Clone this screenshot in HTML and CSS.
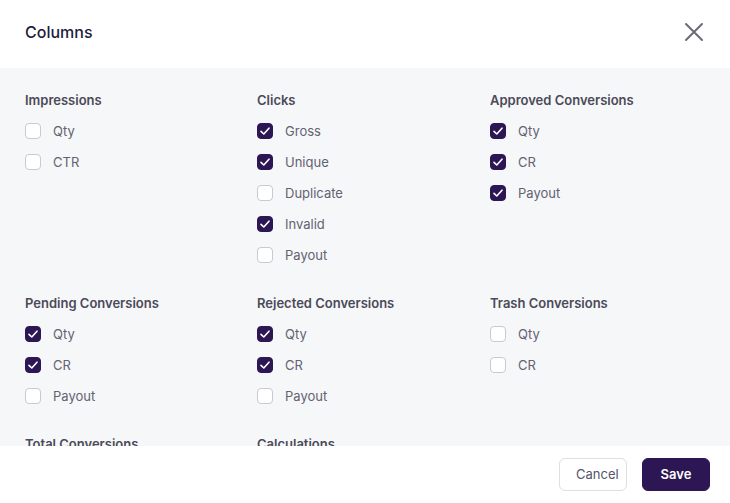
FILE: index.html
```html
<!DOCTYPE html>
<html lang="en">
<head>
  <meta charset="UTF-8" />
  <meta name="viewport" content="width=device-width, initial-scale=1.0" />
  <title>Columns</title>
  <link rel="stylesheet" href="styles.css">
</head>
<body>
  <div class="modal">
    <div class="modal-header">
      <h1>Columns</h1>
      <button class="close" aria-label="Close">
        <svg width="20" height="20" viewBox="0 0 20 20" fill="none" stroke="#6b6a7b" stroke-width="2" stroke-linecap="round">
          <path d="M2 2 L18 18 M18 2 L2 18" />
        </svg>
      </button>
    </div>

    <div class="modal-body">
      <div class="grid">
        <div class="group">
          <h2>Impressions</h2>
          <label class="item"><span class="box"></span>Qty</label>
          <label class="item"><span class="box"></span>CTR</label>
        </div>
        <div class="group">
          <h2>Clicks</h2>
          <label class="item"><span class="box checked"></span>Gross</label>
          <label class="item"><span class="box checked"></span>Unique</label>
          <label class="item"><span class="box"></span>Duplicate</label>
          <label class="item"><span class="box checked"></span>Invalid</label>
          <label class="item"><span class="box"></span>Payout</label>
        </div>
        <div class="group">
          <h2>Approved Conversions</h2>
          <label class="item"><span class="box checked"></span>Qty</label>
          <label class="item"><span class="box checked"></span>CR</label>
          <label class="item"><span class="box checked"></span>Payout</label>
        </div>

        <div class="group">
          <h2>Pending Conversions</h2>
          <label class="item"><span class="box checked"></span>Qty</label>
          <label class="item"><span class="box checked"></span>CR</label>
          <label class="item"><span class="box"></span>Payout</label>
        </div>
        <div class="group">
          <h2>Rejected Conversions</h2>
          <label class="item"><span class="box checked"></span>Qty</label>
          <label class="item"><span class="box checked"></span>CR</label>
          <label class="item"><span class="box"></span>Payout</label>
        </div>
        <div class="group">
          <h2>Trash Conversions</h2>
          <label class="item"><span class="box"></span>Qty</label>
          <label class="item"><span class="box"></span>CR</label>
        </div>

        <div class="group">
          <h2>Total Conversions</h2>
        </div>
        <div class="group">
          <h2>Calculations</h2>
        </div>
      </div>
    </div>

    <div class="modal-footer">
      <button class="btn btn-cancel">Cancel</button>
      <button class="btn btn-save">Save</button>
    </div>
  </div>
</body>
</html>
```

FILE: styles.css
```css
* {
  box-sizing: border-box;
  margin: 0;
  padding: 0;
}
body {
  font-family: Inter, 'Noto Sans', sans-serif;
  background: #fff;
  width: 730px;
  height: 503px;
  overflow: hidden;
}
.modal {
  display: flex;
  flex-direction: column;
  height: 503px;
}
.modal-header {
  height: 68px;
  display: flex;
  align-items: center;
  justify-content: space-between;
  padding: 0 26px 4px 25px;
  background: #fff;
}
.modal-header h1 {
  font-size: 16px;
  font-weight: 500;
  color: #1f1b3b;
}
.close {
  background: none;
  border: none;
  display: flex;
  cursor: pointer;
}
.modal-body {
  height: 378px;
  overflow: hidden;
  background: #f6f7f9;
  padding: 22px 0 0 25px;
}
.grid {
  display: grid;
  grid-template-columns: 232px 233px 1fr;
  row-gap: 23px;
}
.group h2 {
  font-size: 13px;
  line-height: 20px;
  font-weight: 600;
  color: #4b4a58;
  margin-bottom: 5px;
}
.item {
  display: flex;
  align-items: center;
  gap: 12px;
  height: 31px;
  font-size: 13px;
  color: #636271;
}
.box {
  width: 16px;
  height: 16px;
  border: 1px solid #c9c9cf;
  border-radius: 4px;
  background: #fff;
  flex-shrink: 0;
}
.box.checked {
  background: #2d1654 url("data:image/svg+xml;utf8,<svg xmlns='http://www.w3.org/2000/svg' width='16' height='16' viewBox='0 0 16 16'><path d='M4 8.3 L6.8 11 L12 5.2' fill='none' stroke='white' stroke-width='1.6' stroke-linecap='round' stroke-linejoin='round'/></svg>") center / 16px 16px no-repeat;
  border-color: #2d1654;
}
.modal-footer {
  flex-grow: 1;
  display: flex;
  justify-content: flex-end;
  align-items: center;
  gap: 15px;
  padding: 0 20px 1px 0;
  background: #fff;
}
.btn {
  height: 33px;
  padding: 0 16px;
  border-radius: 6px;
  font-family: inherit;
  font-size: 13px;
  cursor: pointer;
}
.btn-cancel {
  background: #fff;
  border: 1px solid #dedee3;
  color: #55546a;
  width: 68px;
}
.btn-save {
  background: #2d1654;
  border: 1px solid #2d1654;
  color: #fff;
  font-weight: 600;
  width: 68px;
}
```
